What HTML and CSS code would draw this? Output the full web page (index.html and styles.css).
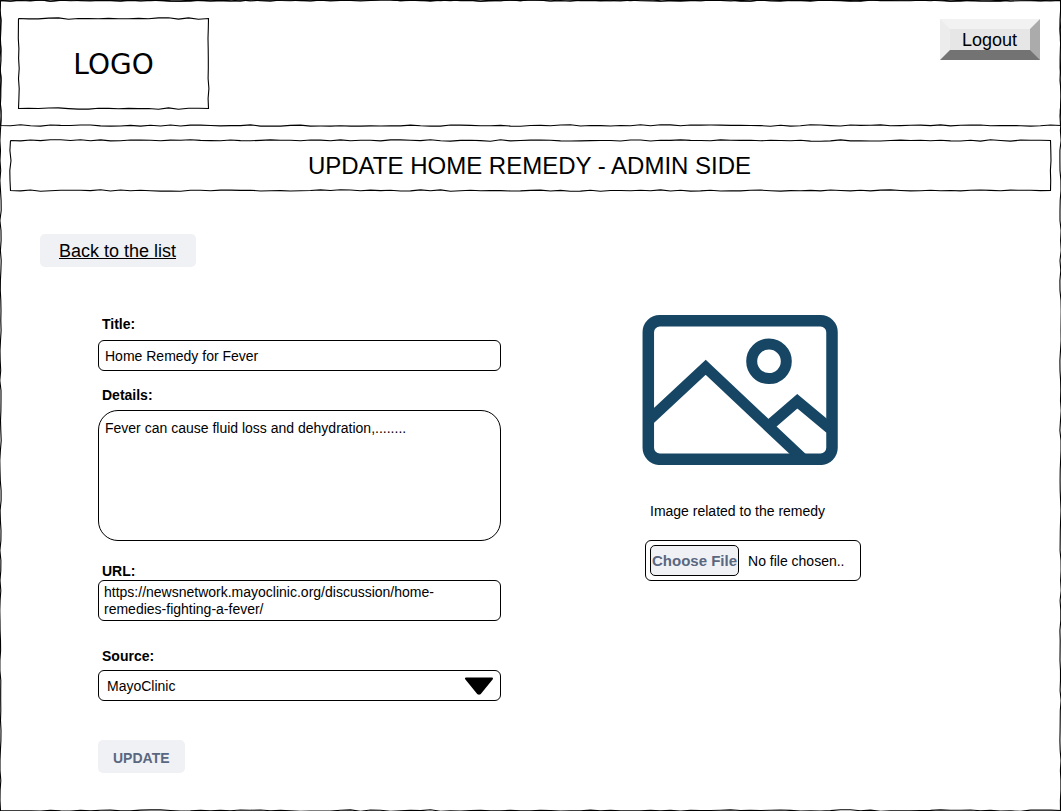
FILE: index.html
```html
<!DOCTYPE html>
<html lang="en">
<head>
<meta charset="utf-8">
<meta name="viewport" content="width=device-width, initial-scale=1">
<title>Update Home Remedy</title>
<link rel="stylesheet" href="styles.css">
</head>
<body>
<div class="page sketch">
  <header class="header sketch">
    <div class="logo sketch">LOGO</div>
    <button class="logout" type="button">Logout</button>
  </header>
  <h1 class="banner sketch">UPDATE HOME REMEDY - ADMIN SIDE</h1>
  <main class="main">
    <a class="back" href="#list">Back to the list</a>
    <form class="form">
      <div class="fields">
        <label class="label" for="title">Title:</label>
        <input class="box title" id="title" type="text" value="Home Remedy for Fever">
        <label class="label" for="details">Details:</label>
        <textarea class="box details" id="details">Fever can cause fluid loss and dehydration,........</textarea>
        <label class="label" for="url">URL:</label>
        <textarea class="box url" id="url" rows="2" spellcheck="false">https://newsnetwork.mayoclinic.org/discussion/home-remedies-fighting-a-fever/</textarea>
        <label class="label" for="source">Source:</label>
        <div class="select">
          <select class="box source" id="source"><option>MayoClinic</option></select>
          <svg class="arrow" viewBox="0 0 30 18" aria-hidden="true"><path d="M2 1.500H28L15.800 16.500Q15 17 14.200 16.500Z" stroke="#000" stroke-width="2" stroke-linejoin="round"/></svg>
        </div>
        <button class="update" type="submit">UPDATE</button>
      </div>
      <div class="media">
        <svg class="picture" viewBox="0 0 196 150" role="img" aria-label="Remedy image">
          <g fill="none" stroke="#164664" stroke-width="11">
            <rect x="6.300" y="5.800" width="183.700" height="138.500" rx="11.500" stroke-width="11.500"/>
            <circle cx="127" cy="46.300" r="17.300"/>
            <path d="M6 106L63.700 52.300L160 143"/>
            <path d="M129 109L155.300 86.300L188 113.500"/>
          </g>
        </svg>
        <p class="caption" id="caption">Image related to the remedy</p>
        <label class="file">
          <input class="file-input" type="file" aria-describedby="caption">
          <span class="choose">Choose File</span>
          <span>No file chosen..</span>
        </label>
      </div>
    </form>
  </main>
</div>
<script src="sketch.js"></script>
</body>
</html>
```

FILE: styles.css
```css
* {
  box-sizing: border-box;
}

body {
  margin: 0;
  background: #fff;
  color: #000;
  font: 14px/16px "Liberation Sans", Arial, sans-serif;
}

button,
input,
select,
textarea {
  font: inherit;
  color: inherit;
}

.page {
  min-height: calc(100vh - 1px);
  padding-bottom: 37px;
}

.sketch {
  position: relative;
}

.sketch-lines {
  position: absolute;
  inset: 0;
  width: 100%;
  height: 100%;
  overflow: visible;
  pointer-events: none;
  fill: none;
  stroke: #000;
  stroke-width: 1.1;
}

.header {
  display: flex;
  justify-content: space-between;
  align-items: flex-start;
  padding: 18px 21px 17px 18px;
}

.logo {
  display: flex;
  align-items: center;
  justify-content: center;
  width: 191px;
  height: 91px;
  padding-top: 2px;
  font: 28px/32px "DejaVu Sans", Verdana, sans-serif;
}

.logout {
  margin-top: 1px;
  padding: 0 13px 0 12px;
  height: 41px;
  border: 10px solid;
  border-color: #f2f2f2 #ababab #737373 #ececec;
  background: #e6e6e6;
  font-size: 18px;
  line-height: 20px;
}

.banner {
  margin: 14px 10px 0;
  padding: 12px 2px 11px 0;
  text-align: center;
  font-size: 24px;
  font-weight: 400;
  line-height: 28px;
}

.main {
  padding: 43px 40px 0;
}

.back {
  display: inline-block;
  padding: 7px 20px 6px 19px;
  border-radius: 5px;
  background: #f0f1f4;
  color: #000;
  font-size: 18px;
  line-height: 20px;
}

.form {
  display: grid;
  grid-template-columns: minmax(0, 403px) auto;
  justify-content: start;
  column-gap: 141px;
  margin-top: 48px;
  padding-left: 58px;
}

.fields {
  display: flex;
  flex-direction: column;
  padding-top: 1px;
}

.label {
  padding-left: 4px;
  font-weight: 700;
}

.box {
  display: block;
  width: 100%;
  margin: 0;
  padding: 0 6px;
  border: 1px solid #000;
  border-radius: 6px;
  background: #fff;
  resize: none;
  overflow: hidden;
}

.title {
  height: 31px;
  margin: 8px 0 16px;
}

.details {
  height: 131px;
  margin: 7px 0 22px;
  padding-top: 9px;
  border-radius: 20px;
}

.url {
  height: 41px;
  margin: 1px 0 27px;
  padding: 3px 5px;
  line-height: 17px;
}

.select {
  position: relative;
  margin-top: 6px;
}

.source {
  height: 31px;
  padding: 0 8px;
  appearance: none;
}

.arrow {
  position: absolute;
  top: 7px;
  right: 7px;
  width: 30px;
  height: 18px;
  pointer-events: none;
}

.update {
  align-self: flex-start;
  margin-top: 39px;
  padding: 2px 15px 0;
  height: 33px;
  border: 0;
  border-radius: 5px;
  background: #f0f1f4;
  color: #596780;
  font-weight: 700;
}

.picture {
  display: block;
  width: 196px;
  height: 150px;
}

.caption {
  margin: 38px 0 21px 8px;
}

.file {
  position: relative;
  display: flex;
  align-items: center;
  gap: 9px;
  width: 216px;
  height: 41px;
  margin-left: 3px;
  padding: 0 4px;
  border: 1px solid #000;
  border-radius: 6px;
}

.file-input {
  position: absolute;
  inset: 0;
  width: 100%;
  opacity: 0;
}

.choose {
  padding: 7px 1px;
  border: 1px solid #000;
  border-radius: 5px;
  background: #f0f1f4;
  color: #596780;
  font-size: 15px;
  font-weight: 700;
  line-height: 15px;
}
```

FILE: sketch.js
```js
// Draws a hand-drawn outline round every .sketch element.
const NS = "http://www.w3.org/2000/svg";

function edge(x1, y1, x2, y2, random) {
  const length = Math.hypot(x2 - x1, y2 - y1);
  const steps = Math.max(1, Math.round(length / 10));
  const nx = (y2 - y1) / length;
  const ny = (x1 - x2) / length;
  let d = "";
  for (let i = 1; i <= steps; i++) {
    const t = i / steps;
    const shift = i === steps ? 0 : (random() - 0.5) * 1.4;
    d += "L" + (x1 + (x2 - x1) * t + nx * shift).toFixed(1) +
         " " + (y1 + (y2 - y1) * t + ny * shift).toFixed(1);
  }
  return d;
}

function draw(element, path, seed) {
  const w = element.clientWidth - 0.5;
  const h = element.clientHeight - 0.5;
  let state = seed * 7919 + 17;
  const random = () => (state = (state * 16807) % 2147483647) / 2147483647;
  path.setAttribute("d", "M0.5 0.5" +
    edge(0.5, 0.5, w, 0.5, random) + edge(w, 0.5, w, h, random) +
    edge(w, h, 0.5, h, random) + edge(0.5, h, 0.5, 0.5, random));
}

document.querySelectorAll(".sketch").forEach((element, index) => {
  const svg = document.createElementNS(NS, "svg");
  const path = document.createElementNS(NS, "path");
  svg.setAttribute("class", "sketch-lines");
  svg.setAttribute("aria-hidden", "true");
  svg.append(path);
  element.append(svg);
  draw(element, path, index + 1);
  new ResizeObserver(() => draw(element, path, index + 1)).observe(element);
});
```
